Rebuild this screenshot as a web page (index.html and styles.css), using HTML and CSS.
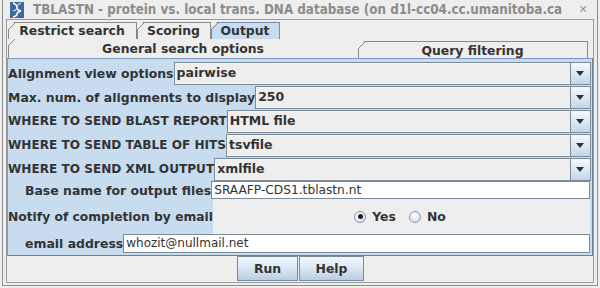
FILE: index.html
```html
<html>
	<head>
		<meta charset="utf8"/>
		<title>TBLASTN</title>
		<link rel="stylesheet" href="styles.css">
	</head>
	<body>
		<div class="window">
			<div class="titlebar">
				<svg class="appIcon" width="14" height="16" viewBox="0 0 14 16">
					<rect x="0" y="0" width="14" height="16" fill="#3b6c9c"/>
					<path d="M3 1 C11 4, 3 7, 11 9 C3 11, 11 13, 3 15" stroke="#fff" stroke-width="1.6" fill="none"/>
					<path d="M11 1 C3 4, 11 7, 3 9" stroke="#cfe0f0" stroke-width="1.2" fill="none"/>
				</svg>
				<span class="title">TBLASTN - protein vs. local trans. DNA database (on d1l-cc04.cc.umanitoba.ca</span>
				<span class="close">&#x2715;</span>
			</div>

			<div class="box">
				<div class="tabRow">
					<div class="tab restrict">Restrict search</div>
					<div class="tab scoring">Scoring</div>
					<div class="tab output selected">Output</div>
				</div>
				<div class="tabRow sub">
					<div class="tab general">General search options</div>
					<div class="tab query">Query filtering</div>
				</div>

				<div class="form">
					<div class="row">
						<span class="label">Alignment view options</span>
						<div class="combo"><span class="value">pairwise</span><span class="arrow"></span></div>
					</div>
					<div class="row">
						<span class="label">Max. num. of alignments to display</span>
						<div class="combo"><span class="value">250</span><span class="arrow"></span></div>
					</div>
					<div class="row">
						<span class="label caps">WHERE TO SEND BLAST REPORT</span>
						<div class="combo"><span class="value">HTML file</span><span class="arrow"></span></div>
					</div>
					<div class="row">
						<span class="label caps">WHERE TO SEND TABLE OF HITS</span>
						<div class="combo"><span class="value">tsvfile</span><span class="arrow"></span></div>
					</div>
					<div class="row">
						<span class="label caps">WHERE TO SEND XML OUTPUT</span>
						<div class="combo"><span class="value">xmlfile</span><span class="arrow"></span></div>
					</div>
					<div class="row text">
						<span class="label indent">Base name for output files</span>
						<div class="field">SRAAFP-CDS1.tblastn.nt</div>
					</div>
					<div class="row notify">
						<span class="label">Notify of completion by email</span>
						<div class="radios">
							<span class="radio checked"></span><span class="radioText">Yes</span>
							<span class="radio"></span><span class="radioText">No</span>
						</div>
					</div>
					<div class="row email">
						<span class="label indent">email address</span>
						<div class="field">whozit@nullmail.net</div>
					</div>
				</div>

				<div class="buttons">
					<div class="button run">Run</div>
					<div class="button help">Help</div>
				</div>
			</div>
		</div>
	</body>
</html>
```

FILE: styles.css
```css
* {
	box-sizing : border-box;
}

html, body {
	margin : 0;
	height : 100%;
}

body {
	background  : #eeeeee;
	font-family : "DejaVu Sans", sans-serif;
	font-size   : 12px;
	color       : #333333;
}

.window {
	margin      : 0 2px;
	height      : 286px;
	border      : 1px solid #8e8e8e;
	border-top  : none;
	display     : flex;
	flex-direction : column;
}

.titlebar {
	height      : 19px;
	display     : flex;
	align-items : center;
	padding-left : 7px;
}

.appIcon {
	flex-shrink : 0;
	margin-top  : 1px;
}

.title {
	margin-left : 9px;
	font-family : "DejaVu Sans Condensed", "DejaVu Sans", sans-serif;
	font-stretch : condensed;
	font-size   : 13.3px;
	font-weight : bold;
	color       : #8c8c8c;
	white-space : nowrap;
	flex        : 1;
	overflow    : hidden;
}

.close {
	width       : 16px;
	margin-right: 6px;
	color       : #9a9a9a;
	font-size   : 11px;
	text-align  : center;
}

.box {
	margin   : 0 3px 2px 3px;
	flex     : 1;
	border   : 1px solid #9a9a9a;
	display  : flex;
	flex-direction : column;
}

.tabRow {
	display      : flex;
	margin-top   : 2px;
	padding-left : 1px;
	height       : 17px;
}

.tabRow.sub {
	margin-top : 0;
	height     : 19px;
	padding-right : 5px;
}

.tab {
	position    : relative;
	border      : 1px solid #8a8a8a;
	border-bottom : none;
	border-left : none;
	font-weight : bold;
	font-size   : 12.4px;
	line-height : 16px;
	text-align  : center;
	background  : #eeeeee;
	clip-path   : polygon(6px 0, 100% 0, 100% 100%, 0 100%, 0 6px);
}

/* left edge and chamfer of each tab */
.tab::before {
	content  : "";
	position : absolute;
	left     : 0;
	top      : 0;
	bottom   : 0;
	width    : 7px;
	background : linear-gradient(to bottom right, transparent 0, transparent calc(50% - 0.6px), #8a8a8a calc(50% - 0.6px), #8a8a8a calc(50% + 0.6px), transparent calc(50% + 0.6px)) top left / 7px 7px no-repeat,
	             linear-gradient(#8a8a8a, #8a8a8a) 0 6px / 1px 100% no-repeat;
}

.tab.restrict {
	width : 129px;
}

.tab.scoring {
	width : 74px;
}

.tab.output {
	width : 69px;
}

.tab.selected {
	background   : #c8dcf0;
	border-color : #7a8aa8;
}

.tab.general {
	width        : 350px;
	border-top   : none;
	border-right : none;
	padding-top  : 2px;
}

.tab.query {
	flex        : 1;
	margin-top  : 2px;
	line-height : 17px;
}

.form {
	height      : 198px;
	background  : #c8dcf0;
	border      : 1px solid #7f9ac0;
	border-right-color  : #6f8096;
	border-bottom-color : #6f8096;
	padding     : 2px 1px 0 0;
	display     : flex;
	flex-direction : column;
}

.row {
	display     : flex;
	align-items : center;
	height      : 24px;
}

.label {
	font-weight : bold;
	font-size   : 12.45px;
	white-space : nowrap;
}

.label.caps {
	font-size : 12.1px;
}

.label.indent {
	padding-left : 17px;
}

.row.notify .label {
	font-size : 12.3px;
}

.combo {
	flex        : 1;
	height      : 23px;
	display     : flex;
	background  : #eeeeee;
	border      : 1px solid #7a8a99;
	box-shadow  : inset 0 0 0 1px #f6f6f6;
}

.combo .value {
	flex        : 1;
	font-weight : bold;
	padding-left : 2px;
	line-height : 20px;
	font-size   : 12.5px;
}

.arrow {
	width       : 20px;
	border-left : 1px solid #7a8a99;
	background  : linear-gradient(#f4f8fc, #c2d6ea);
	position    : relative;
}

.arrow::after {
	content  : "";
	position : absolute;
	left     : 5px;
	top      : 8px;
	border-left  : 4.5px solid transparent;
	border-right : 4.5px solid transparent;
	border-top   : 5px solid #333333;
}

.row.text {
	height : 18px;
}

.field {
	flex        : 1;
	height      : 18px;
	margin-right : 1px;
	background  : #ffffff;
	border      : 1px solid #7a8a99;
	padding-left : 2px;
	line-height : 16px;
	font-size   : 12.2px;
}

.row.notify {
	height      : 35px;
	align-items : stretch;
}

.row.notify .label {
	padding-top : 11px;
}

.radios {
	flex        : 1;
	background  : #eeeeee;
	display     : flex;
	align-items : center;
	justify-content : center;
	margin-right : 1px;
	padding-right : 3px;
}

.radio {
	width         : 12px;
	height        : 12px;
	border-radius : 50%;
	border        : 1px solid #8a9aaa;
	background    : radial-gradient(circle at 40% 35%, #ffffff 0, #dfe8f2 60%, #b8cbe0 100%);
	position      : relative;
	margin-right  : 6px;
}

.radio.checked::after {
	content  : "";
	position : absolute;
	left     : 2.5px;
	top      : 2.5px;
	width    : 5px;
	height   : 5px;
	border-radius : 50%;
	background    : #222222;
}

.radioText {
	font-weight  : bold;
	font-size    : 12.4px;
	margin-right : 13px;
}

.radioText:last-child {
	margin-right : 0;
}

.row.email {
	height : 19px;
}

.row.email .field {
	height    : 19px;
	font-size : 12px;
}

.buttons {
	flex        : 1;
	display     : flex;
	justify-content : center;
	align-items : center;
	padding-left : 1px;
}

.button {
	height      : 25px;
	border      : 1px solid #7a8a99;
	background  : linear-gradient(#f2f7fc, #dde9f5 45%, #b8cde3);
	font-weight : bold;
	font-size   : 12.4px;
	line-height : 23px;
	text-align  : center;
	margin-top  : -1px;
}

.button.run {
	width        : 61px;
	margin-right : 1px;
}

.button.help {
	width : 65px;
}
```
